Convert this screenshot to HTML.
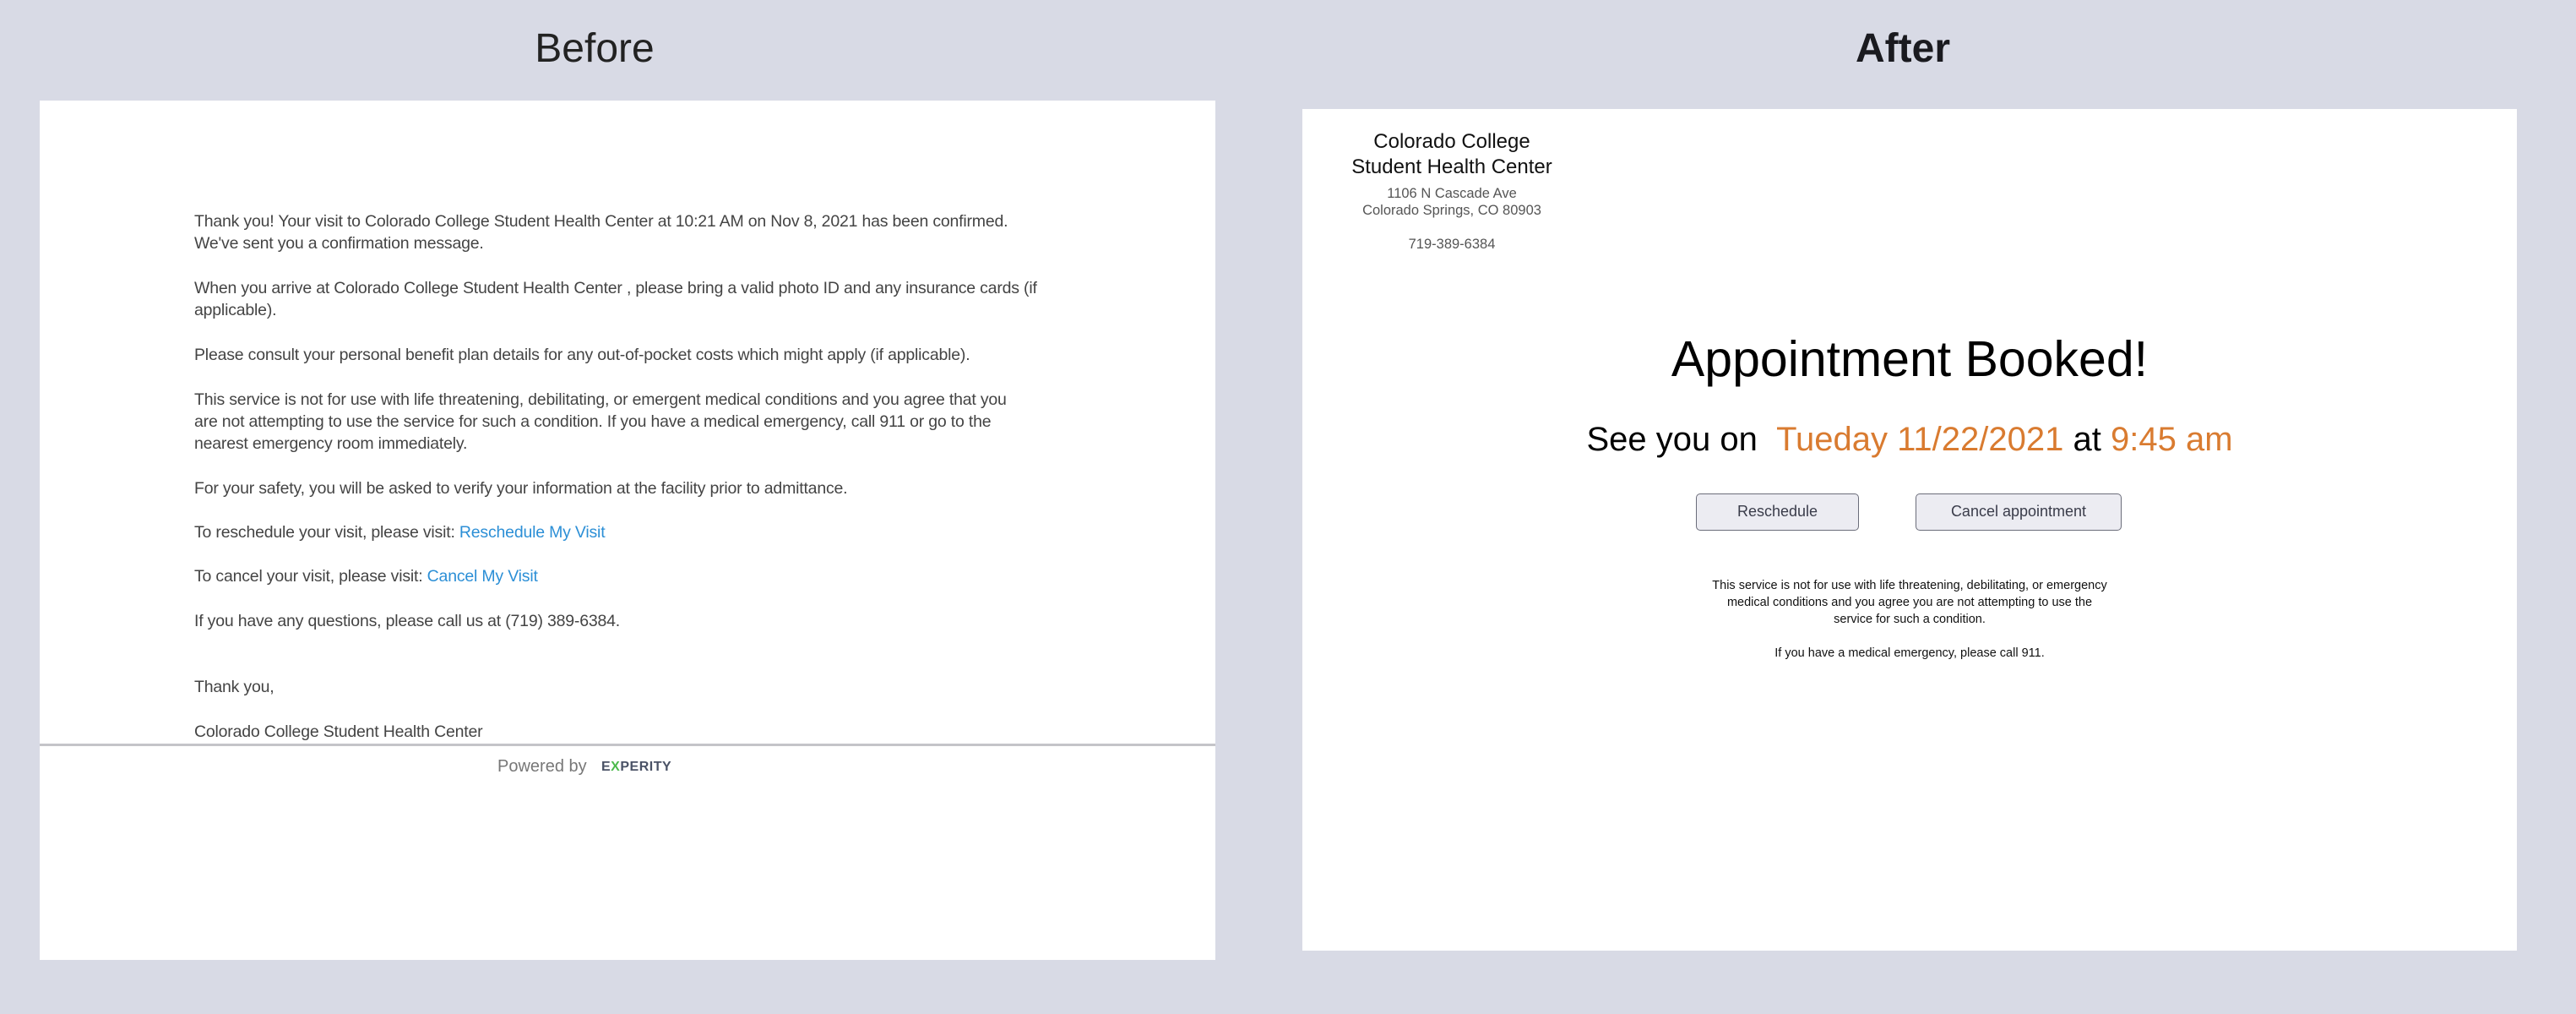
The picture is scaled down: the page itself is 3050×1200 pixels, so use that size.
<!DOCTYPE html>
<html><head><meta charset="utf-8"><style>
*{margin:0;padding:0;box-sizing:border-box}
body{width:3050px;height:1200px;background:#d8dae5;position:relative;overflow:hidden;font-family:"Liberation Sans",sans-serif}
.t{position:absolute;white-space:nowrap}
.panel{position:absolute;background:#fff}
.before p{position:absolute;left:183px;font-size:19.5px;line-height:26px;color:#444;white-space:nowrap;letter-spacing:-0.2px}
.before a{color:#2c8fd6;text-decoration:none}
.org{color:#d97b30}
.btn{position:absolute;top:455px;height:44px;background:#ececf2;border:1.5px solid #6b6d7a;border-radius:5px;font-size:18px;color:#3a3c4a;text-align:center;line-height:41px}
.c{position:absolute;text-align:center;white-space:nowrap;transform:translateX(-50%)}
</style></head><body>
<div class="t" style="left:704px;top:30px;transform:translateX(-50%);font-size:48px;color:#222">Before</div>
<div class="t" style="left:2253px;top:30px;transform:translateX(-50%);font-size:48px;font-weight:bold;color:#1a1a1f">After</div>

<div class="panel before" style="left:47px;top:119px;width:1392px;height:1017px">
<p style="top:130px">Thank you! Your visit to Colorado College Student Health Center at 10:21 AM on Nov 8, 2021 has been confirmed.<br>We've sent you a confirmation message.</p>
<p style="top:209px">When you arrive at Colorado College Student Health Center , please bring a valid photo ID and any insurance cards (if<br>applicable).</p>
<p style="top:288px">Please consult your personal benefit plan details for any out-of-pocket costs which might apply (if applicable).</p>
<p style="top:341px">This service is not for use with life threatening, debilitating, or emergent medical conditions and you agree that you<br>are not attempting to use the service for such a condition. If you have a medical emergency, call 911 or go to the<br>nearest emergency room immediately.</p>
<p style="top:446px">For your safety, you will be asked to verify your information at the facility prior to admittance.</p>
<p style="top:498px">To reschedule your visit, please visit: <a>Reschedule My Visit</a></p>
<p style="top:550px">To cancel your visit, please visit: <a>Cancel My Visit</a></p>
<p style="top:603px">If you have any questions, please call us at (719) 389-6384.</p>
<p style="top:681px">Thank you,</p>
<p style="top:734px">Colorado College Student Health Center</p>
<div style="position:absolute;left:0;top:761px;width:1392px;height:3px;background:#c4c4c8"></div>
<div class="t" style="left:542px;top:777px;font-size:20px;color:#777">Powered by</div>
<div class="t" style="left:665px;top:780px;font-size:16px;font-weight:bold;color:#4a5266;letter-spacing:0.5px">E<span style="color:#4cba4c">X</span>PERITY</div>
</div>

<div class="panel" style="left:1542px;top:129px;width:1438px;height:996px">
<div class="c" style="left:177px;top:24px;font-size:24px;line-height:30px;color:#111">Colorado College<br>Student Health Center</div>
<div class="c" style="left:177px;top:90px;font-size:16.5px;line-height:20px;color:#555">1106 N Cascade Ave<br>Colorado Springs, CO 80903</div>
<div class="c" style="left:177px;top:150px;font-size:16.5px;line-height:20px;color:#555">719-389-6384</div>
<div class="c" style="left:719px;top:262px;font-size:59px;color:#000">Appointment Booked!</div>
<div class="c" style="left:719px;top:369px;font-size:40px;color:#000">See you on &nbsp;<span class="org">Tueday 11/22/2021</span> at <span class="org">9:45 am</span></div>
<div class="btn" style="left:466px;width:193px">Reschedule</div>
<div class="btn" style="left:726px;width:244px">Cancel appointment</div>
<div class="c" style="left:719px;top:554px;font-size:14.5px;line-height:20px;color:#111">This service is not for use with life threatening, debilitating, or emergency<br>medical conditions and you agree you are not attempting to use the<br>service for such a condition.</div>
<div class="c" style="left:719px;top:634px;font-size:14.5px;line-height:20px;color:#111">If you have a medical emergency, please call 911.</div>
</div>
</body></html>
